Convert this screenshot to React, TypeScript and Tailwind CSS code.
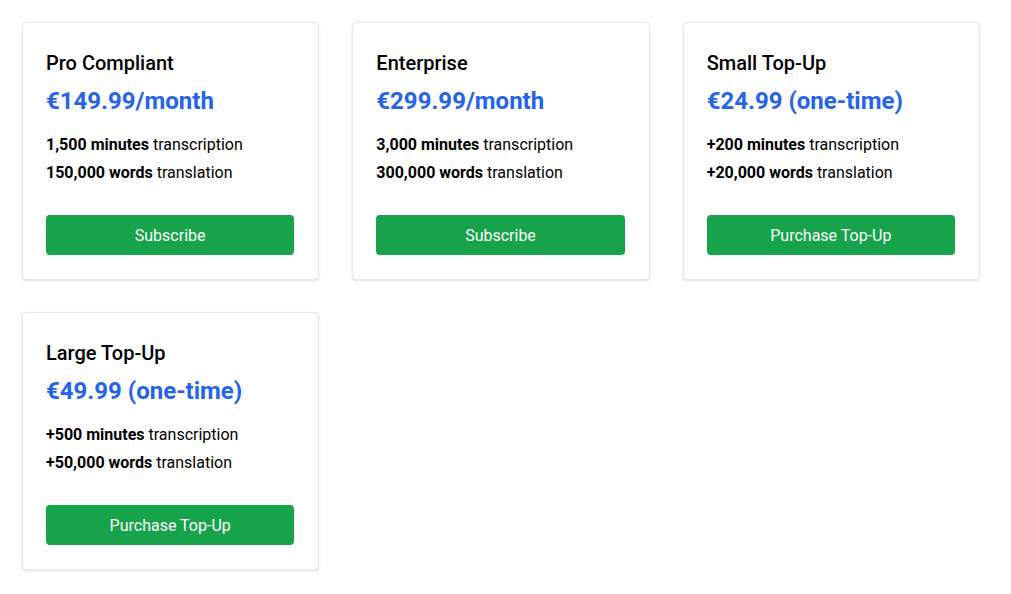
const plans = [
  {
    name: "Pro Compliant",
    price: "€149.99/month",
    minutes: "1,500 minutes",
    words: "150,000 words",
    action: "Subscribe",
  },
  {
    name: "Enterprise",
    price: "€299.99/month",
    minutes: "3,000 minutes",
    words: "300,000 words",
    action: "Subscribe",
  },
  {
    name: "Small Top-Up",
    price: "€24.99 (one-time)",
    minutes: "+200 minutes",
    words: "+20,000 words",
    action: "Purchase Top-Up",
  },
  {
    name: "Large Top-Up",
    price: "€49.99 (one-time)",
    minutes: "+500 minutes",
    words: "+50,000 words",
    action: "Purchase Top-Up",
  },
];

export default function App() {
  return (
    <div
      className="min-h-screen bg-white pl-[22px] pt-[22px] text-black"
      style={{ fontFamily: 'Roboto, "Noto Sans", sans-serif' }}
    >
      <div className="grid w-[958px] grid-cols-3 gap-x-[33px] gap-y-8">
        {plans.map((plan) => (
          <div
            key={plan.name}
            className="rounded border border-gray-200 bg-white pb-6 pl-[23px] pr-6 pt-[26px] shadow-sm"
          >
            <h3 className="mb-2 text-xl font-medium">{plan.name}</h3>
            <p className="mb-4 text-2xl font-bold text-[#2563eb]">{plan.price}</p>
            <ul className="space-y-1 text-base">
              <li>
                <strong className="font-bold">{plan.minutes}</strong> transcription
              </li>
              <li>
                <strong className="font-bold">{plan.words}</strong> translation
              </li>
            </ul>
            <button className="mt-[30px] h-10 w-full rounded bg-[#16a34a] pt-0.5 text-base text-white">
              {plan.action}
            </button>
          </div>
        ))}
      </div>
    </div>
  );
}
